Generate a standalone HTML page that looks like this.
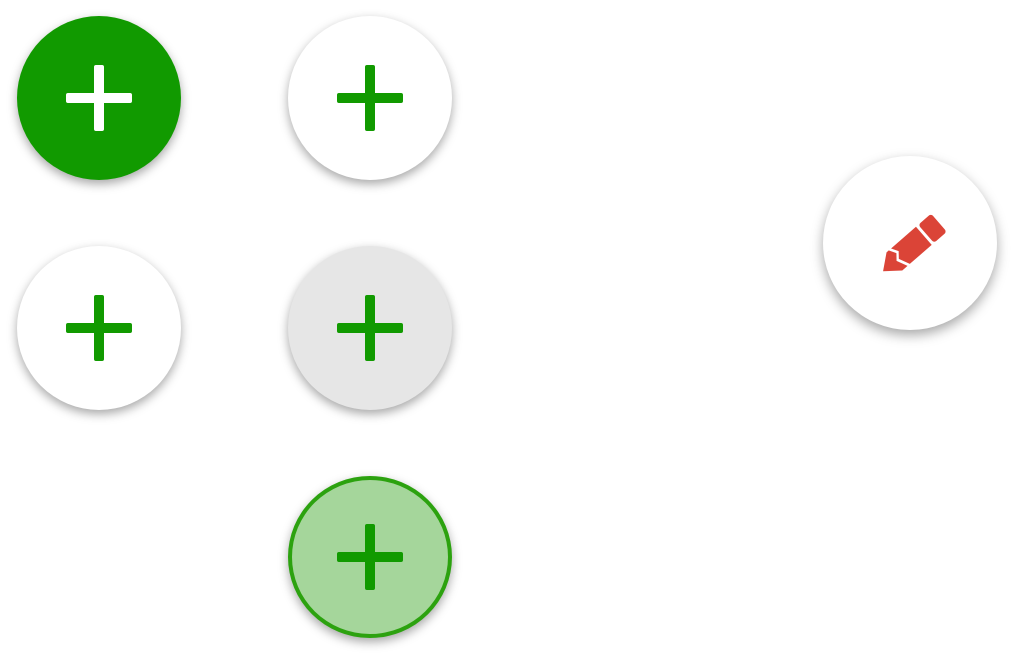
<!DOCTYPE html>
<html><head><style>
html,body{margin:0;padding:0;background:#fff;width:1024px;height:657px;overflow:hidden;position:relative}
.f{position:absolute;border-radius:50%;box-sizing:border-box;box-shadow:0 4px 10px rgba(0,0,0,.35)}
.p{position:absolute;left:50%;top:50%}
.p:before,.p:after{content:"";position:absolute;background:#119a00;border-radius:2px}
.p:before{width:66px;height:10px;left:-33px;top:-5px}
.p:after{width:10px;height:66px;left:-5px;top:-33px}
.w:before,.w:after{background:#fff}
</style></head><body>
<div class="f" style="left:17px;top:16px;width:164px;height:164px;background:#119a00"><div class="p w"></div></div>
<div class="f" style="left:288px;top:16px;width:164px;height:164px;background:#fff"><div class="p"></div></div>
<div class="f" style="left:17px;top:246px;width:164px;height:164px;background:#fff"><div class="p"></div></div>
<div class="f" style="left:288px;top:246px;width:164px;height:164px;background:#e6e6e6"><div class="p"></div></div>
<div class="f" style="left:288px;top:476px;width:164px;height:162px;background:#a5d69b;border:4px solid #2ca20f"><div class="p"></div></div>
<div class="f" style="left:823px;top:156px;width:174px;height:174px;background:#fff;box-shadow:0 5px 12px rgba(0,0,0,.35)"></div>
<svg style="position:absolute;left:860px;top:195px" width="100" height="100" viewBox="0 0 100 100">
<g transform="translate(51,52) rotate(-41)" fill="#db4437">
<path d="M-37 0 L-22 -12 L-19 -12 L-15 -5 L-20 1 L-15 12 L-22 12 Z"/>
<path d="M-16 -12 L17 -12 L17 12 L-12 12 L-17 1 L-12 -5 Z"/>
<rect x="20" y="-12" width="17" height="24" rx="3"/>
</g></svg>
</body></html>
